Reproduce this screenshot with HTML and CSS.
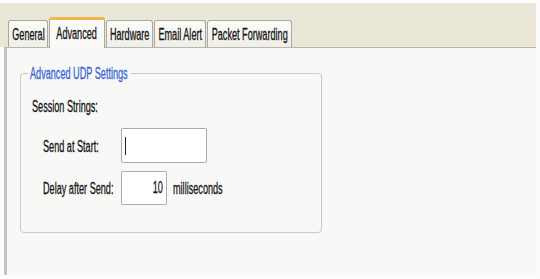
FILE: index.html
```html
<!DOCTYPE html>
<html>
<head>
<meta charset="utf-8">
<link rel="stylesheet" href="styles.css">
</head>
<body>
<div class="window">
  <div class="tabstrip">
    <div class="tab w-general"><span class="sq">General</span></div>
    <div class="tab active w-advanced"><span class="sq">Advanced</span></div>
    <div class="tab w-hardware"><span class="sq">Hardware</span></div>
    <div class="tab w-email"><span class="sq">Email Alert</span></div>
    <div class="tab w-packet"><span class="sq">Packet Forwarding</span></div>
  </div>
  <div class="panel">
    <div class="group">
      <div class="legend"><span class="sq left">Advanced UDP Settings</span></div>
      <div class="heading"><span class="sq left">Session Strings:</span></div>
      <div class="rows">
        <div class="label"><span class="sq left">Send at Start:</span></div>
        <div class="input wide"><span class="caret"></span></div>
        <div class="label"><span class="sq left">Delay after Send:</span></div>
        <div class="delay">
          <div class="input narrow"><span class="sq right">10</span></div>
          <div class="unit"><span class="sq left">milliseconds</span></div>
        </div>
      </div>
    </div>
  </div>
</div>
</body>
</html>
```

FILE: styles.css
```css
html, body {
  margin: 0;
  padding: 0;
}
body {
  background: #fcfcfc;
  font-family: "Liberation Sans", Arial, sans-serif;
  font-size: 16px;
  color: #141414;
  width: 540px;
  height: 279px;
  overflow: hidden;
}
.sq {
  display: inline-block;
  white-space: nowrap;
  transform: scaleX(0.57);
  transform-origin: center;
  line-height: 16px;
  -webkit-text-stroke: 0.3px currentColor;
}
.sq.left { transform-origin: left center; }
.sq.right { transform-origin: right center; }

.window {
  padding-top: 3px;
}
.tabstrip {
  width: 536px;
  height: 44px;
  box-sizing: border-box;
  background: #eae7d8;
  display: flex;
  align-items: flex-end;
  padding-left: 8px;
}
.tab {
  height: 27px;
  box-sizing: border-box;
  border: 1px solid #aaa9a0;
  border-bottom: none;
  border-radius: 3px 3px 0 0;
  background: linear-gradient(#fbfbf8, #efeee8);
  display: flex;
  align-items: center;
  justify-content: center;
  margin-right: 1px;
  padding-top: 1px;
}
.tab.active {
  height: 31px;
  margin-bottom: -1px;
  background: #fafaf8;
  border-top: 3px solid #f4b54a;
  position: relative;
  z-index: 1;
  padding-top: 0;
}
.w-general { width: 40px; }
.w-advanced { width: 56px; }
.w-hardware { width: 47px; }
.w-email { width: 52px; }
.w-packet { width: 85px; }

.panel {
  margin-left: 4px;
  width: 532px;
  height: 228px;
  box-sizing: border-box;
  border-left: 3px solid #c4c4c2;
  border-top: 1px solid #b9b7ab;
  background: #f8f8f6;
  padding: 25px 0 0 13px;
}
.group {
  width: 302px;
  height: 160px;
  box-sizing: border-box;
  border: 1px solid #cacac8;
  border-radius: 4px;
}
.legend {
  width: 99px;
  height: 16px;
  padding: 0 2px;
  margin: -9px 0 0 7px;
  background: #f8f8f6;
  color: #3567d6;
  overflow: visible;
}
.heading {
  margin: 17px 0 0 11px;
  height: 16px;
}
.rows {
  margin: 14px 0 0 22px;
  display: grid;
  grid-template-columns: 78px auto;
  row-gap: 8px;
  align-items: center;
}
.label {
  height: 16px;
}
.input {
  box-sizing: border-box;
  background: #ffffff;
  border: 1px solid #a2abb6;
  border-radius: 2px;
  display: flex;
  align-items: center;
}
.input.wide {
  width: 86px;
  height: 35px;
}
.input.narrow {
  width: 46px;
  height: 34px;
  justify-content: flex-end;
  padding-right: 3px;
}
.caret {
  width: 1px;
  height: 18px;
  background: #222;
  margin-left: 3px;
}
.delay {
  display: flex;
  align-items: center;
  gap: 6px;
}
.unit {
  height: 16px;
}
```
